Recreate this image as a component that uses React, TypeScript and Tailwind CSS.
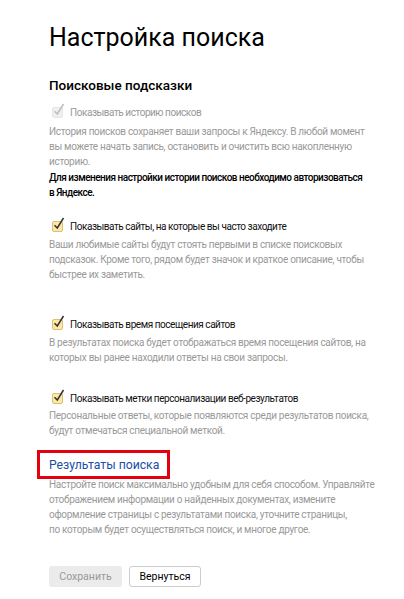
import React from "react";

function Check({ disabled }: { disabled?: boolean }) {
  return (
    <span className="relative inline-block w-[11px] h-[11px] shrink-0">
      <span
        className={
          disabled
            ? "absolute inset-0 rounded-[2px] bg-[#f0f0f0] border border-[#e6e6e6]"
            : "absolute inset-0 rounded-[2px] bg-[#fde7a3] border border-[#d9c07a]"
        }
      />
      <svg
        className="absolute left-[1px] top-[-4px]"
        width="12"
        height="13"
        viewBox="0 0 12 13"
      >
        <path
          d="M1.5 8.2 L4.3 11 L10.5 1"
          fill="none"
          stroke={disabled ? "#bdbdbd" : "#333"}
          strokeWidth="1.5"
        />
      </svg>
    </span>
  );
}

function Row({ label, disabled }: { label: string; disabled?: boolean }) {
  return (
    <div className="flex items-center gap-[7px] h-[18px] pl-[3px]">
      <Check disabled={disabled} />
      <span
        className={
          disabled
            ? "whitespace-nowrap text-[10px] tracking-[-0.45px] text-[#999]"
            : "whitespace-nowrap text-[10px] tracking-[-0.45px] text-[#111]"
        }
      >
        {label}
      </span>
    </div>
  );
}

function Desc({ children, className = "" }: { children: React.ReactNode; className?: string }) {
  return (
    <p className={"whitespace-nowrap text-[10px] tracking-[-0.3px] leading-[15px] text-[#999] " + className}>
      {children}
    </p>
  );
}

export default function App() {
  return (
    <div className="min-h-[599px] bg-white font-['Roboto',sans-serif] pl-[49px] pr-[20px] pt-[24px]">
      <h1 className="text-[25px] leading-[28px] text-[#000]">Настройка поиска</h1>
      <h2 className="mt-[23px] text-[13.5px] leading-[20px] font-medium text-[#000]">
        Поисковые подсказки
      </h2>

      <div className="mt-[8px]">
        <Row label="Показывать историю поисков" disabled />
        <Desc className="mt-[3px]">
          История поисков сохраняет ваши запросы к Яндексу. В любой момент
          <br />
          вы можете начать запись, остановить и очистить всю накопленную
          <br />
          историю.
        </Desc>
        <p className="mt-[1px] whitespace-nowrap text-[10px] tracking-[-0.5px] leading-[15px] font-medium text-[#000]">
          Для изменения настройки истории поисков необходимо авторизоваться
          <br />в Яндексе.
        </p>
      </div>

      <div className="mt-[17px]">
        <Row label="Показывать сайты, на которые вы часто заходите" />
        <Desc className="mt-[2px]">
          Ваши любимые сайты будут стоять первыми в списке поисковых
          <br />
          подсказок. Кроме того, рядом будет значок и краткое описание, чтобы
          <br />
          быстрее их заметить.
        </Desc>
      </div>

      <div className="mt-[33px]">
        <Row label="Показывать время посещения сайтов" />
        <Desc className="mt-[2px]">
          В результатах поиска будет отображаться время посещения сайтов, на
          <br />
          которых вы ранее находили ответы на свои запросы.
        </Desc>
      </div>

      <div className="mt-[24px]">
        <Row label="Показывать метки персонализации веб-результатов" />
        <Desc className="mt-[1px]">
          Персональные ответы, которые появляются среди результатов поиска,
          <br />
          будут отмечаться специальной меткой.
        </Desc>
      </div>

      <div className="relative mt-[17px] w-fit">
        <a className="block whitespace-nowrap text-[12.2px] leading-[20px] text-[#1a4ea4]">Результаты поиска</a>
        <span className="absolute left-[-12px] top-[-5px] w-[133px] h-[29px] border-[3px] border-[#e3000f]" />
      </div>
      <Desc className="mt-[2px]">
        Настройте поиск максимально удобным для себя способом. Управляйте
        <br />
        отображением информации о найденных документах, измените
        <br />
        оформление страницы с результатами поиска, уточните страницы,
        <br />
        по которым будет осуществляться поиск, и многое другое.
      </Desc>

      <div className="mt-[29px] flex gap-[7px]">
        <button className="w-[73px] h-[21px] rounded-[3px] bg-[#ebebeb] text-[10.5px] text-[#999]">
          Сохранить
        </button>
        <button className="w-[72px] h-[21px] rounded-[3px] bg-white border border-[#ccc] text-[10.5px] text-[#000]">
          Вернуться
        </button>
      </div>
    </div>
  );
}
